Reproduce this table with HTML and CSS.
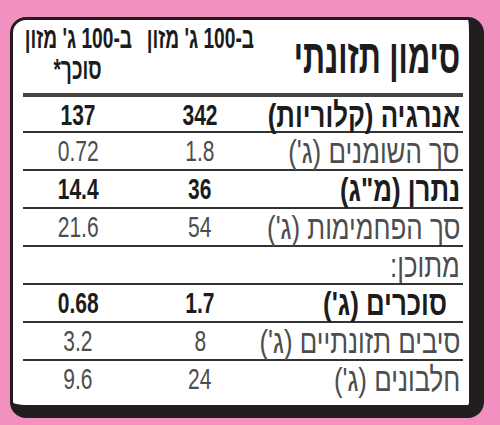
FILE: index.html
```html
<!DOCTYPE html>
<html lang="he" dir="rtl">
<head>
    <meta charset="UTF-8">
    <title>סימון תזונתי</title>
    <link rel="stylesheet" href="styles.css">
</head>
<body>
    <div class="card">
        <div class="row head">
            <div class="label"><span class="cx title">סימון תזונתי</span></div>
            <div class="val colhead"><span class="cx">ב-100 ג' מזון</span></div>
            <div class="val colhead"><span class="cx">ב-100 ג' מזון</span><span class="cx">סוכך*</span></div>
        </div>
        <div class="row bold first">
            <div class="label"><span class="cx">אנרגיה (קלוריות)</span></div>
            <div class="val"><span class="cx">342</span></div>
            <div class="val"><span class="cx">137</span></div>
        </div>
        <div class="row">
            <div class="label"><span class="cx">סך השומנים (ג')</span></div>
            <div class="val"><span class="cx">1.8</span></div>
            <div class="val"><span class="cx">0.72</span></div>
        </div>
        <div class="row bold">
            <div class="label"><span class="cx">נתרן (מ"ג)</span></div>
            <div class="val"><span class="cx">36</span></div>
            <div class="val"><span class="cx">14.4</span></div>
        </div>
        <div class="row">
            <div class="label"><span class="cx">סך הפחמימות (ג')</span></div>
            <div class="val"><span class="cx">54</span></div>
            <div class="val"><span class="cx">21.6</span></div>
        </div>
        <div class="row">
            <div class="label"><span class="cx">מתוכן:</span></div>
            <div class="val"></div>
            <div class="val"></div>
        </div>
        <div class="row bold">
            <div class="label indent"><span class="cx">סוכרים (ג')</span></div>
            <div class="val"><span class="cx">1.7</span></div>
            <div class="val"><span class="cx">0.68</span></div>
        </div>
        <div class="row">
            <div class="label"><span class="cx">סיבים תזונתיים (ג')</span></div>
            <div class="val"><span class="cx">8</span></div>
            <div class="val"><span class="cx">3.2</span></div>
        </div>
        <div class="row last">
            <div class="label"><span class="cx">חלבונים (ג')</span></div>
            <div class="val"><span class="cx">24</span></div>
            <div class="val"><span class="cx">9.6</span></div>
        </div>
    </div>
</body>
</html>
```

FILE: styles.css
```css
body {
    margin: 0;
    background-color: #f290bf;
    font-family: "Liberation Sans", Arial, sans-serif;
    color: #4d4d4d;
}

/* label card, thick dark edge on the right and bottom */
.card {
    margin: 17px auto 0 10px;
    width: 440px;
    padding: 0 6px 8px 10px;
    overflow: hidden;
    background-color: #fff;
    border-style: solid;
    border-color: #221e1f;
    border-width: 3px 15px 13px 3px;
    border-radius: 16px;
}

.row {
    display: grid;
    grid-template-columns: minmax(0, 1fr) 134px 110px;
    align-items: center;
    height: 36px;
    border-bottom: 2px solid #333;
    line-height: 36px;
}

.row.first {
    height: 34px;
}

.row.last {
    border-bottom: none;
}

.row.bold {
    font-weight: bold;
    color: #1c1c1c;
}

.head {
    height: 73px;
    border-bottom: 4px solid #444;
    align-items: start;
    color: #1c1c1c;
    font-weight: bold;
}

.label {
    min-width: 0;
    display: flex;
    justify-content: flex-start;
    padding-right: 3px;
    font-size: 34px;
}

.label.indent {
    padding-right: 16px;
}

.val {
    min-width: 0;
    display: flex;
    flex-direction: column;
    align-items: center;
    font-size: 30px;
}

/* the print face is very narrow */
.cx {
    display: inline-block;
    flex: none;
    white-space: nowrap;
    transform: scaleX(0.7);
}

.label .cx {
    transform: scaleX(0.76);
    transform-origin: right center;
}

.label .title {
    font-size: 48px;
    line-height: 73px;
    transform: scaleX(0.64);
}

.colhead {
    font-size: 29px;
    line-height: 31px;
    padding-top: 3px;
}

.colhead .cx {
    transform: scaleX(0.66);
}
```
